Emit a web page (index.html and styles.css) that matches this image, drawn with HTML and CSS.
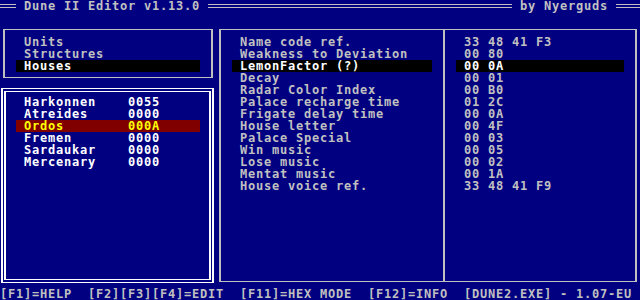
FILE: index.html
```html
<!DOCTYPE html>
<html lang="en">
<head>
  <meta charset="UTF-8" />
  <title>Dune II Editor</title>
  <link rel="stylesheet" href="styles.css">
</head>
<body>
  <div class="screen">
    <header class="title">
      <span class="caption">Dune II Editor v1.13.0</span>
      <span class="caption">by Nyerguds</span>
    </header>

    <nav class="box menu">
      <div class="item">Units</div>
      <div class="item">Structures</div>
      <div class="item active">Houses</div>
    </nav>

    <section class="houses">
      <div class="house"><span class="name">Harkonnen</span><span>0055</span></div>
      <div class="house"><span class="name">Atreides</span><span>0000</span></div>
      <div class="house selected"><span class="name">Ordos</span><span>000A</span></div>
      <div class="house"><span class="name">Fremen</span><span>0000</span></div>
      <div class="house"><span class="name">Sardaukar</span><span>0000</span></div>
      <div class="house"><span class="name">Mercenary</span><span>0000</span></div>
    </section>

    <main class="box editor">
      <div class="pane labels">
        <div class="item">Name code ref.</div>
        <div class="item">Weakness to Deviation</div>
        <div class="item active">LemonFactor (?)</div>
        <div class="item">Decay</div>
        <div class="item">Radar Color Index</div>
        <div class="item">Palace recharge time</div>
        <div class="item">Frigate delay time</div>
        <div class="item">House letter</div>
        <div class="item">Palace Special</div>
        <div class="item">Win music</div>
        <div class="item">Lose music</div>
        <div class="item">Mentat music</div>
        <div class="item">House voice ref.</div>
      </div>
      <div class="divider"></div>
      <div class="pane values">
        <div class="item">33 48 41 F3</div>
        <div class="item">00 80</div>
        <div class="item active">00 0A</div>
        <div class="item">00 01</div>
        <div class="item">00 B0</div>
        <div class="item">01 2C</div>
        <div class="item">00 0A</div>
        <div class="item">00 4F</div>
        <div class="item">00 03</div>
        <div class="item">00 05</div>
        <div class="item">00 02</div>
        <div class="item">00 1A</div>
        <div class="item">33 48 41 F9</div>
      </div>
    </main>

    <footer class="footer">[F1]=HELP  [F2][F3][F4]=EDIT  [F11]=HEX MODE  [F12]=INFO  [DUNE2.EXE] - 1.07-EU</footer>
  </div>
</body>
</html>
```

FILE: styles.css
```css
body {
  margin: 0;
  background-color: #000080;
}

/* 80x25 text mode, 8x12 cells */
.screen {
  width: 640px;
  height: 300px;
  display: grid;
  grid-template-columns: repeat(80, 8px);
  grid-template-rows: repeat(25, 12px);
  background-color: #000080;
  color: #c0c0c0;
  font-family: 'DejaVu Sans Mono', 'Liberation Mono', monospace;
  font-weight: bold;
  font-size: 12px;
  letter-spacing: 0.7754px;
  line-height: 12px;
  overflow: hidden;
}

/* title bar: double rule across the row, captions mask it */
.title {
  grid-column: 1 / -1;
  grid-row: 1;
  display: flex;
  justify-content: space-between;
  padding: 0 16px;
  background-image: linear-gradient(to bottom,
    transparent 4px, #c0c0c0 4px, #c0c0c0 5px,
    transparent 5px, transparent 7px, #c0c0c0 7px, #c0c0c0 8px,
    transparent 8px);
}

.title .caption {
  padding: 0 8px;
  background-color: #000080;
  white-space: pre;
}

.title .caption:last-child {
  margin-right: 8px;
}

.box {
  margin: 5px 3px 6px 3px;
  border: solid #c0c0c0;
  border-width: 1px 2px;
}

.item,
.house {
  height: 12px;
  white-space: pre;
}

.menu {
  grid-column: 1 / 28;
  grid-row: 3 / 8;
  padding: 6px 3px 5px 3px;
}

.menu .item {
  margin: 0 8px;
  padding-left: 8px;
}

.item.active {
  background-color: #000000;
  color: #ffffff;
}

.houses {
  grid-column: 1 / 28;
  grid-row: 8 / 25;
  margin: 4px 2px 5px 1px;
  border: double #ffffff;
  border-width: 4px 5px;
  padding: 4px 1px 0 2px;
  color: #ffffff;
}

.house {
  display: flex;
  margin: 0 8px;
  padding-left: 8px;
}

.house .name {
  width: 104px;
}

.house.selected {
  background-color: #800000;
  color: #ffff00;
}

.editor {
  grid-column: 28 / 81;
  grid-row: 3 / 25;
  display: grid;
  grid-template-columns: 222px 2px 190px;
}

.pane {
  padding-top: 6px;
}

.pane .item {
  margin-left: 11px;
  padding-left: 8px;
}

.labels .item { width: 192px; }
.values .item { width: 160px; }

.divider {
  background-color: #c0c0c0;
}

.footer {
  grid-column: 1 / -1;
  grid-row: 25;
  white-space: pre;
}
```
